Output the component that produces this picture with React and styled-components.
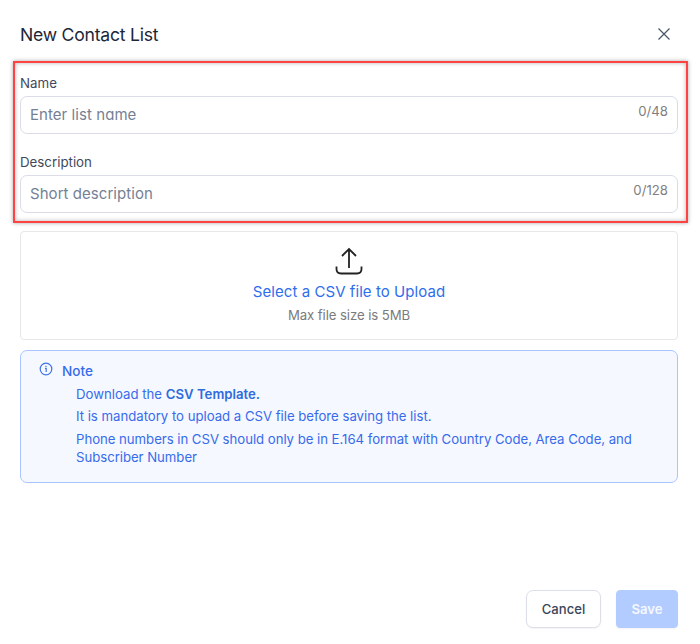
import React from "react";
import styled, { createGlobalStyle } from "styled-components";

const GlobalStyle = createGlobalStyle`
  * { box-sizing: border-box; }
  body { margin: 0; background: #fff; font-family: Inter, "Liberation Sans", sans-serif; }
`;

const Dialog = styled.main`
  width: 700px;
  height: 644px;
  padding: 22px 22px 16px 20px;
  display: flex;
  flex-direction: column;
  background: #fff;
`;

const Header = styled.header`
  display: flex;
  justify-content: space-between;
  height: 39px;
  padding-right: 7px;
`;

const Title = styled.h1`
  margin: 0;
  font-size: 17.6px;
  letter-spacing: -0.24px;
  line-height: 26px;
  font-weight: 400;
  color: #1d2638;
`;

const CloseButton = styled.button`
  width: 14px;
  height: 24px;
  padding: 0;
  border: 0;
  background: none;
  display: flex;
  align-items: center;
`;

const Highlight = styled.section`
  height: 162px;
  margin: 0 -10px 0 -7px;
  padding: 12px 8px 0 5px;
  border: 2px solid #ff4242;
  box-shadow: 0 0 4px rgba(0, 0, 0, 0.35), inset 0 0 4px rgba(0, 0, 0, 0.3);
  display: flex;
  flex-direction: column;
  gap: 20px;
`;

const Field = styled.div`
  display: flex;
  flex-direction: column;
  gap: 4px;
`;

const Label = styled.label`
  font-size: 13.3px;
  line-height: 17px;
  color: #3f495c;
`;

const InputBox = styled.div`
  height: 38px;
  display: flex;
  justify-content: space-between;
  padding: 0 9px;
  border: 1px solid #dadce8;
  border-radius: 7px;
`;

const Input = styled.input`
  flex: 1;
  min-width: 0;
  padding: 0;
  border: 0;
  outline: 0;
  background: none;
  font: 400 15px/36px Inter, sans-serif;
  font-feature-settings: ${(p) => (p.$roundA ? '"cv11"' : "normal")};
  letter-spacing: ${(p) => p.$spacing || "0"};
  &::placeholder { color: #757f94; opacity: 1; }
`;

const Counter = styled.span`
  font-size: 13.2px;
  line-height: 28px;
  color: #808080;
`;

const Upload = styled.section`
  height: 109px;
  margin-top: 8px;
  border: 1px solid #e7e7e7;
  border-radius: 4px;
  display: flex;
  flex-direction: column;
  align-items: center;
  padding-top: 15px;
`;

const UploadLink = styled.a`
  margin-top: 7px;
  font-size: 15px;
  letter-spacing: 0.06px;
  line-height: 20px;
  color: #2e6eed;
`;

const Hint = styled.p`
  margin: 5px 0 0;
  font-size: 13.2px;
  letter-spacing: -0.09px;
  line-height: 16px;
  color: #7b7b7b;
`;

const Note = styled.aside`
  height: 133px;
  margin-top: 10px;
  padding: 10px 18px 0;
  border: 1px solid #a9c5ff;
  border-radius: 7px;
  background: #f5f8ff;
  color: #376bec;
  display: flex;
  gap: 9px;
`;

const NoteIcon = styled.span`
  display: flex;
  width: 14px;
  height: 14px;
  margin-top: 1px;
`;

const NoteBody = styled.div`
  font-size: 13.2px;
  line-height: 18.7px;
`;

const NoteTitle = styled.h2`
  margin: 0 0 4px;
  font-size: 13.6px;
  line-height: 20px;
  font-weight: 450;
`;

const NoteItems = styled.div`
  width: 590px;
  padding-left: 14px;
  display: flex;
  flex-direction: column;
  gap: 3.6px;
`;

const NoteItem = styled.p`
  margin: 0;
  letter-spacing: ${(p) => p.$spacing || "0"};
  strong { font-weight: 600; color: #2f6bdc; }
`;

const Footer = styled.footer`
  margin-top: auto;
  display: flex;
  justify-content: flex-end;
  gap: 15px;
`;

const Button = styled.button`
  width: ${(p) => (p.$primary ? "62px" : "75px")};
  height: 38px;
  padding: 0;
  border: 1px solid ${(p) => (p.$primary ? "#b2ccff" : "#dcdfe9")};
  border-radius: ${(p) => (p.$primary ? "4px" : "7px")};
  background: ${(p) => (p.$primary ? "#b2ccff" : "#fff")};
  color: ${(p) => (p.$primary ? "#f5f8ff" : "#3b4558")};
  box-shadow: 0 1px 2px rgba(16, 24, 40, 0.05);
  font: ${(p) => (p.$primary ? 600 : 500)} 13.1px Inter, sans-serif;
`;

export default function App() {
  return (
    <>
      <GlobalStyle />
      <Dialog>
        <Header>
          <Title>New Contact List</Title>
          <CloseButton aria-label="Close">
            <svg width="14" height="14" viewBox="0 0 14 14" fill="none" stroke="#465468" strokeWidth="1.2">
              <path d="M1.5 1.5L12.5 12.5M12.5 1.5L1.5 12.5" />
            </svg>
          </CloseButton>
        </Header>

        <Highlight>
          <Field>
            <Label htmlFor="name">Name</Label>
            <InputBox>
              <Input id="name" placeholder="Enter list name" $roundA $spacing="0.06px" />
              <Counter>0/48</Counter>
            </InputBox>
          </Field>
          <Field>
            <Label htmlFor="description">Description</Label>
            <InputBox>
              <Input id="description" placeholder="Short description" $spacing="0.05px" />
              <Counter>0/128</Counter>
            </InputBox>
          </Field>
        </Highlight>

        <Upload>
          <svg width="28" height="28" viewBox="0 0 28 28" fill="none" stroke="#222" strokeWidth="1.8">
            <path d="M14 21V2M7 9L14 2L21 9" />
            <path d="M1.5 19.5V22C1.5 25 3.2 26.5 6 26.5H22C24.8 26.5 26.5 25 26.5 22V19.5" />
          </svg>
          <UploadLink>Select a CSV file to Upload</UploadLink>
          <Hint>Max file size is 5MB</Hint>
        </Upload>

        <Note>
          <NoteIcon>
            <svg width="14" height="14" viewBox="0 0 14 14" fill="none" stroke="#3f73e4" strokeWidth="1.2">
              <circle cx="7" cy="7" r="5.8" />
              <path d="M6 6.4H7.2V10M7 3.8V5" />
            </svg>
          </NoteIcon>
          <NoteBody>
            <NoteTitle>Note</NoteTitle>
            <NoteItems>
              <NoteItem>Download the <strong>CSV Template.</strong></NoteItem>
              <NoteItem $spacing="-0.02px">It is mandatory to upload a CSV file before saving the list.</NoteItem>
              <NoteItem $spacing="-0.04px">
                Phone numbers in CSV should only be in E.164 format with Country Code, Area Code, and Subscriber Number
              </NoteItem>
            </NoteItems>
          </NoteBody>
        </Note>

        <Footer>
          <Button>Cancel</Button>
          <Button $primary>Save</Button>
        </Footer>
      </Dialog>
    </>
  );
}
